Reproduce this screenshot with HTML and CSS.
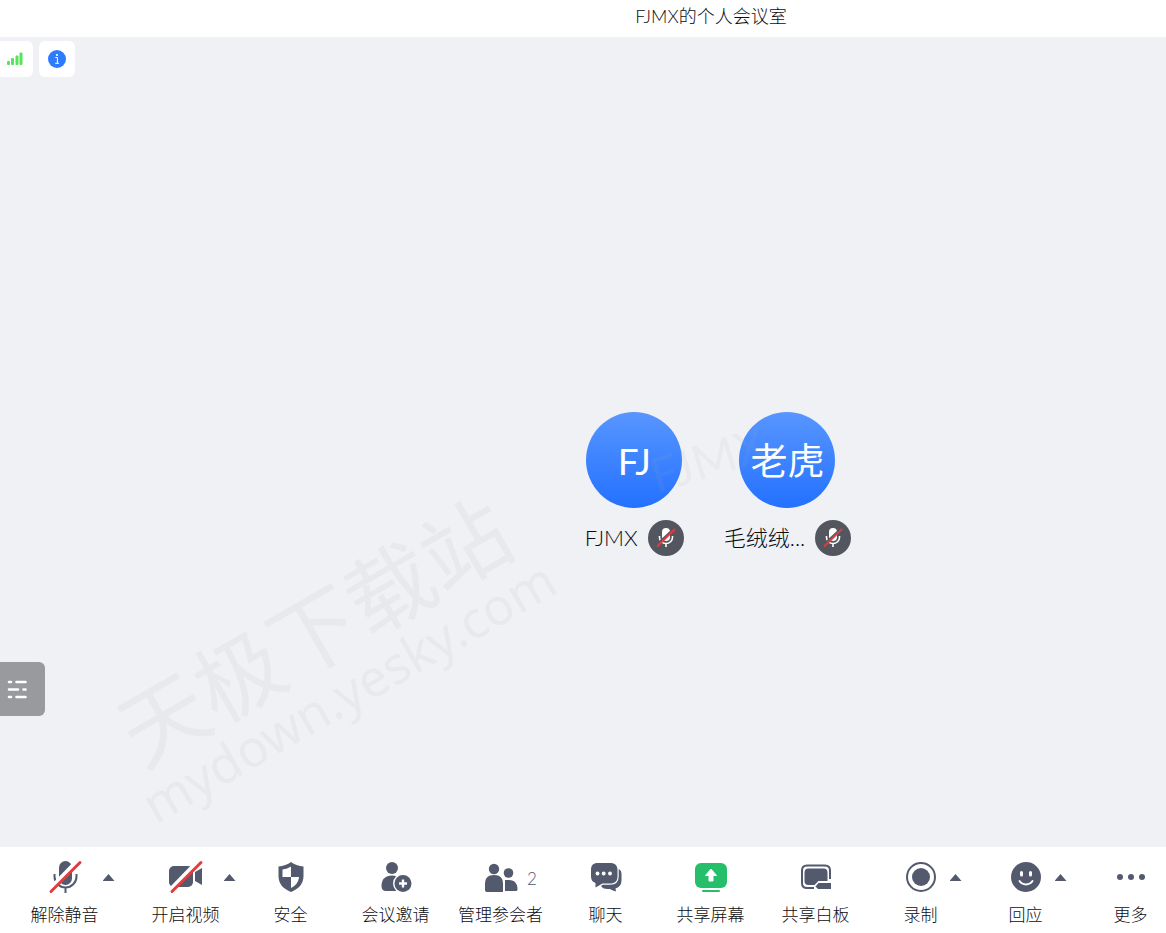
FILE: index.html
```html
<!DOCTYPE html>
<html lang="zh-CN">
<head>
  <meta charset="UTF-8" />
  <title>FJMX的个人会议室</title>
  <link rel="stylesheet" href="styles.css">
</head>
<body>
  <svg class="sprite" aria-hidden="true">
    <symbol id="mic-small" viewBox="0 0 20 20">
      <rect x="6" y="0" width="8" height="13" rx="4" fill="#fff"/>
      <path d="M3.500 8v1.500a6.500 6 0 0 0 13 0V8M10 15.500v3.500" fill="none" stroke="#fff" stroke-width="1.600"/>
      <path d="M0 17.500L18 .5" stroke="#53565e" stroke-width="2"/>
      <path d="M1 18.500L19 1" stroke="#e23c3f" stroke-width="2"/>
    </symbol>
  </svg>

  <div class="app">
    <header class="title-bar">
      <h1>FJMX的个人会议室</h1>
    </header>

    <main class="stage">
      <div class="status">
        <button class="status-btn" aria-label="网络">
          <svg width="18" height="18" viewBox="0 0 18 18" fill="#54e35c">
            <rect x="1" y="11" width="3" height="4" rx="1"/>
            <rect x="5" y="8" width="3" height="7" rx="1"/>
            <rect x="9.500" y="5.500" width="3" height="9.500" rx="1"/>
            <rect x="13.500" y="2.500" width="3" height="12.500" rx="1"/>
          </svg>
        </button>
        <button class="status-btn" aria-label="会议信息">
          <svg width="18" height="18" viewBox="0 0 18 18">
            <circle cx="9" cy="9" r="9" fill="#2f7bff"/>
            <circle cx="9" cy="5" r="1.100" fill="#fff"/>
            <path d="M7.300 7.500H9.400V13M7.200 13.300H11" fill="none" stroke="#fff" stroke-width="1"/>
          </svg>
        </button>
      </div>

      <div class="members">
        <div class="member">
          <div class="avatar">FJ</div>
          <div class="member-name">
            <span>FJMX</span>
            <i class="muted"><svg width="20" height="20"><use href="#mic-small"/></svg></i>
          </div>
        </div>
        <div class="member">
          <div class="avatar">老虎</div>
          <div class="member-name">
            <span>毛绒绒...</span>
            <i class="muted"><svg width="20" height="20"><use href="#mic-small"/></svg></i>
          </div>
        </div>
      </div>

      <button class="drawer" aria-label="列表">
        <svg width="20" height="20" viewBox="0 0 20 20" stroke="#fff" stroke-width="2.600" stroke-linecap="round">
          <path d="M2 3H4M9.500 3h9M2 10.500H11M16.500 10.500h2M2 18H4M9.500 18h9"/>
        </svg>
      </button>

      <div class="mark site-mark">
        <div class="site-name">天极下载站</div>
        <div class="site-url">mydown.yesky.com</div>
      </div>
      <div class="mark user-mark">FJMX</div>
    </main>

    <nav class="toolbar">
      <div class="tool tool-first">
        <button class="tool-main">
          <svg width="36" height="36" viewBox="0 0 36 36">
            <rect x="12" y="2" width="13" height="24" rx="6.500" fill="#535a6e"/>
            <path d="M7.500 15v2.500a11 11 0 0 0 22 0V15M18.500 29v5" fill="none" stroke="#535a6e" stroke-width="2"/>
            <path d="M2 31L31 1" stroke="#fff" stroke-width="4"/>
            <path d="M4 32.500L33 3.500" stroke="#e23c3f" stroke-width="3" stroke-linecap="round"/>
          </svg>
          <span>解除静音</span>
        </button>
        <button class="caret" aria-label="音频选项"></button>
      </div>
      <div class="tool">
        <button class="tool-main">
          <svg width="36" height="36" viewBox="0 0 36 36">
            <rect x="1" y="7" width="24" height="21" rx="5" fill="#535a6e"/>
            <path d="M27 13l7-4v17l-7-4z" fill="#535a6e"/>
            <path d="M2 31L31 1" stroke="#fff" stroke-width="4"/>
            <path d="M4 32.500L33 3.500" stroke="#e23c3f" stroke-width="3" stroke-linecap="round"/>
          </svg>
          <span>开启视频</span>
        </button>
        <button class="caret" aria-label="视频选项"></button>
      </div>
      <div class="tool">
        <button class="tool-main">
          <svg width="36" height="36" viewBox="0 0 36 36">
            <path d="M18 3C15 5.500 10 7 5.500 7.500V17c0 8 5 13 12.500 16 7.500-3 12.500-8 12.500-16V7.500C26 7 21 5.500 18 3z" fill="#535a6e"/>
            <path d="M18 7.500V18H9.500V10.500C13 10 15.500 9 18 7.500zM18 18h8c-.5 5-3 8.500-8 11z" fill="#fff"/>
          </svg>
          <span>安全</span>
        </button>
      </div>
      <div class="tool">
        <button class="tool-main">
          <svg width="36" height="36" viewBox="0 0 36 36" fill="#535a6e">
            <circle cx="14" cy="9" r="6"/>
            <path d="M3.500 27c0-7 4-10.500 10.500-10.500S24 20 24 27v5H8c-3 0-4.500-1.500-4.500-5z"/>
            <circle cx="25" cy="24.500" r="10" fill="#fff"/>
            <circle cx="25" cy="24.500" r="8.500"/>
            <path d="M25 20.500v8M21 24.500h8" stroke="#fff" stroke-width="2.400"/>
          </svg>
          <span>会议邀请</span>
        </button>
      </div>
      <div class="tool">
        <button class="tool-main">
          <svg width="36" height="36" viewBox="0 0 36 36" fill="#535a6e">
            <circle cx="11" cy="10" r="5.200"/>
            <circle cx="25.500" cy="14" r="4.800"/>
            <path d="M2 25c0-6 3-9 9-9s9 3 9 9v8H4.500C3 33 2 32.500 2 31z"/>
            <path d="M22 21h4c6 0 8.500 4 8.500 9 0 1.500-.5 2-2 2H22z"/>
          </svg>
          <span>管理参会者</span>
        </button>
        <span class="count">2</span>
      </div>
      <div class="tool">
        <button class="tool-main">
          <svg width="36" height="36" viewBox="0 0 36 36">
            <path d="M13 27c2 3 5 3 8 3 2 0 3 1.500 7 2.500l-.5-3c4-1.500 6-4 6-8V16c0-4-1-5-3-6z" fill="#535a6e"/>
            <path d="M10 4h12c5 0 7.500 2.500 7.500 7v6.500c0 4.500-2.500 7-7.500 7H14.500L7.500 28.500V24C4.500 23 3 21 3 17.500V11c0-4.500 2-7 7-7z" fill="#535a6e" stroke="#fff" stroke-width="2.400" paint-order="stroke"/>
            <g fill="#fff"><circle cx="9.500" cy="14.500" r="1.900"/><circle cx="15.700" cy="14.500" r="1.900"/><circle cx="22" cy="14.500" r="1.900"/></g>
          </svg>
          <span>聊天</span>
        </button>
      </div>
      <div class="tool">
        <button class="tool-main">
          <svg width="36" height="36" viewBox="0 0 36 36">
            <rect x="2" y="4" width="32" height="25" rx="6" fill="#25bf6c"/>
            <path d="M10 32h16" stroke="#25bf6c" stroke-width="2" stroke-linecap="round"/>
            <path d="M18 10l5.500 6.500H20V22h-4v-5.500h-3.500z" fill="#fff" stroke="#fff" stroke-linejoin="round"/>
          </svg>
          <span>共享屏幕</span>
        </button>
      </div>
      <div class="tool">
        <button class="tool-main">
          <svg width="36" height="36" viewBox="0 0 36 36">
            <path d="M16 29H9q-5 0-5-5V11.500q0-5 5-5h18q5 0 5 5V20" fill="none" stroke="#535a6e" stroke-width="2"/>
            <path d="M10.500 9.500h15q4 0 4 4V22h-9l-4 4h-6q-4 0-4-4v-8.500q0-4 4-4z" fill="#535a6e"/>
            <path d="M17.500 27.500l3-3.500H33v6H20z" fill="#535a6e"/>
          </svg>
          <span>共享白板</span>
        </button>
      </div>
      <div class="tool">
        <button class="tool-main">
          <svg width="36" height="36" viewBox="0 0 36 36">
            <circle cx="18" cy="18" r="14" fill="none" stroke="#535a6e" stroke-width="2"/>
            <circle cx="18" cy="18" r="9" fill="#535a6e"/>
          </svg>
          <span>录制</span>
        </button>
        <button class="caret" aria-label="录制选项"></button>
      </div>
      <div class="tool">
        <button class="tool-main">
          <svg width="36" height="36" viewBox="0 0 36 36">
            <circle cx="18" cy="18" r="15" fill="#535a6e"/>
            <path d="M13.500 13.500v2.500M22.500 13.500v2.500" stroke="#fff" stroke-width="3" stroke-linecap="round"/>
            <path d="M11.500 22c3 4.500 10 4.500 13 0" fill="none" stroke="#fff" stroke-width="2" stroke-linecap="round"/>
          </svg>
          <span>回应</span>
        </button>
        <button class="caret" aria-label="回应选项"></button>
      </div>
      <div class="tool">
        <button class="tool-main">
          <svg width="36" height="36" viewBox="0 0 36 36" fill="#535a6e">
            <circle cx="7" cy="18" r="3"/>
            <circle cx="18" cy="18" r="3"/>
            <circle cx="29" cy="18" r="3"/>
          </svg>
          <span>更多</span>
        </button>
      </div>
    </nav>
  </div>
</body>
</html>
```
FILE: styles.css
```css
* {
  box-sizing: border-box;
}

body {
  margin: 0;
  font-family: Lato, "Noto Sans CJK SC", "Microsoft YaHei", sans-serif;
  font-weight: 300;
  color: #0c0d12;
}

button {
  padding: 0;
  border: none;
  background: none;
  font: inherit;
  color: inherit;
  cursor: pointer;
}

svg {
  display: block;
}

.sprite {
  position: absolute;
  width: 0;
  height: 0;
}

.app {
  display: flex;
  flex-direction: column;
  height: 100vh;
  overflow: hidden;
}

.title-bar {
  padding: 3px 0 8px 256px;
  background: #fff;
}

.title-bar h1 {
  margin: 0;
  font-size: 18px;
  line-height: 26px;
  font-weight: 300;
  text-align: center;
}

/* meeting area */
.stage {
  position: relative;
  flex: 1;
  display: flex;
  align-items: center;
  justify-content: center;
  padding: 84px 0 0 270px;
  background: #eff1f5;
  overflow: hidden;
}

.status {
  position: absolute;
  top: 4px;
  left: -3px;
  display: flex;
  gap: 6px;
}

.status-btn {
  display: flex;
  align-items: center;
  justify-content: center;
  width: 36px;
  height: 36px;
  background: #fff;
  border-radius: 6px;
}

.members {
  display: flex;
  gap: 40px;
}

.member {
  display: flex;
  flex-direction: column;
  align-items: center;
  gap: 12px;
}

.avatar {
  width: 96px;
  height: 96px;
  border-radius: 50%;
  background: linear-gradient(#5896ff, #2371ff);
  color: #fff;
  font-size: 37px;
  font-weight: 400;
  line-height: 98px;
  text-align: center;
}

.member-name {
  display: flex;
  align-items: center;
  gap: 10px;
  font-size: 22px;
  line-height: 36px;
}

.muted {
  display: flex;
  align-items: center;
  justify-content: center;
  width: 36px;
  height: 36px;
  border-radius: 50%;
  background: #53565e;
}

.drawer {
  position: absolute;
  left: 0;
  bottom: 131px;
  width: 45px;
  height: 54px;
  padding-left: 7px;
  background: #999a9d;
  border-radius: 0 6px 6px 0;
}

/* watermarks */
.mark {
  position: absolute;
  color: rgba(170, 170, 170, 0.1);
  font-weight: 400;
  text-align: center;
  white-space: nowrap;
  pointer-events: none;
}

.site-mark {
  top: 551px;
  left: 88px;
  width: 480px;
  transform: rotate(-30deg);
}

.site-name {
  font-size: 87px;
  line-height: 80px;
}

.site-url {
  font-family: "Noto Sans", sans-serif;
  font-size: 51px;
  line-height: 56px;
}

.user-mark {
  top: 396px;
  left: 648px;
  width: 120px;
  font-size: 48px;
  line-height: 52px;
  transform: rotate(-17deg);
}

/* bottom bar */
.toolbar {
  display: flex;
  padding: 12px 0 4px 12px;
  background: #fff;
}

.tool {
  flex: 1 0 105px;
  display: grid;
  grid-template-columns: 1fr auto 1fr;
  align-items: start;
}

.tool-first {
  margin-right: 16px;
}

.tool-main {
  grid-column: 2;
  display: flex;
  flex-direction: column;
  align-items: center;
  gap: 6px;
  min-width: 50px;
  font-size: 17px;
  line-height: 28px;
  white-space: nowrap;
}

.caret {
  justify-self: start;
  width: 12px;
  height: 7px;
  margin: 15px 0 0 4px;
  background: #535a6e;
  clip-path: polygon(50% 0, 100% 100%, 0 100%);
}

.count {
  width: 0;
  margin-left: -16px;
  font-size: 17px;
  line-height: 40px;
  color: #535a6e;
}
```
